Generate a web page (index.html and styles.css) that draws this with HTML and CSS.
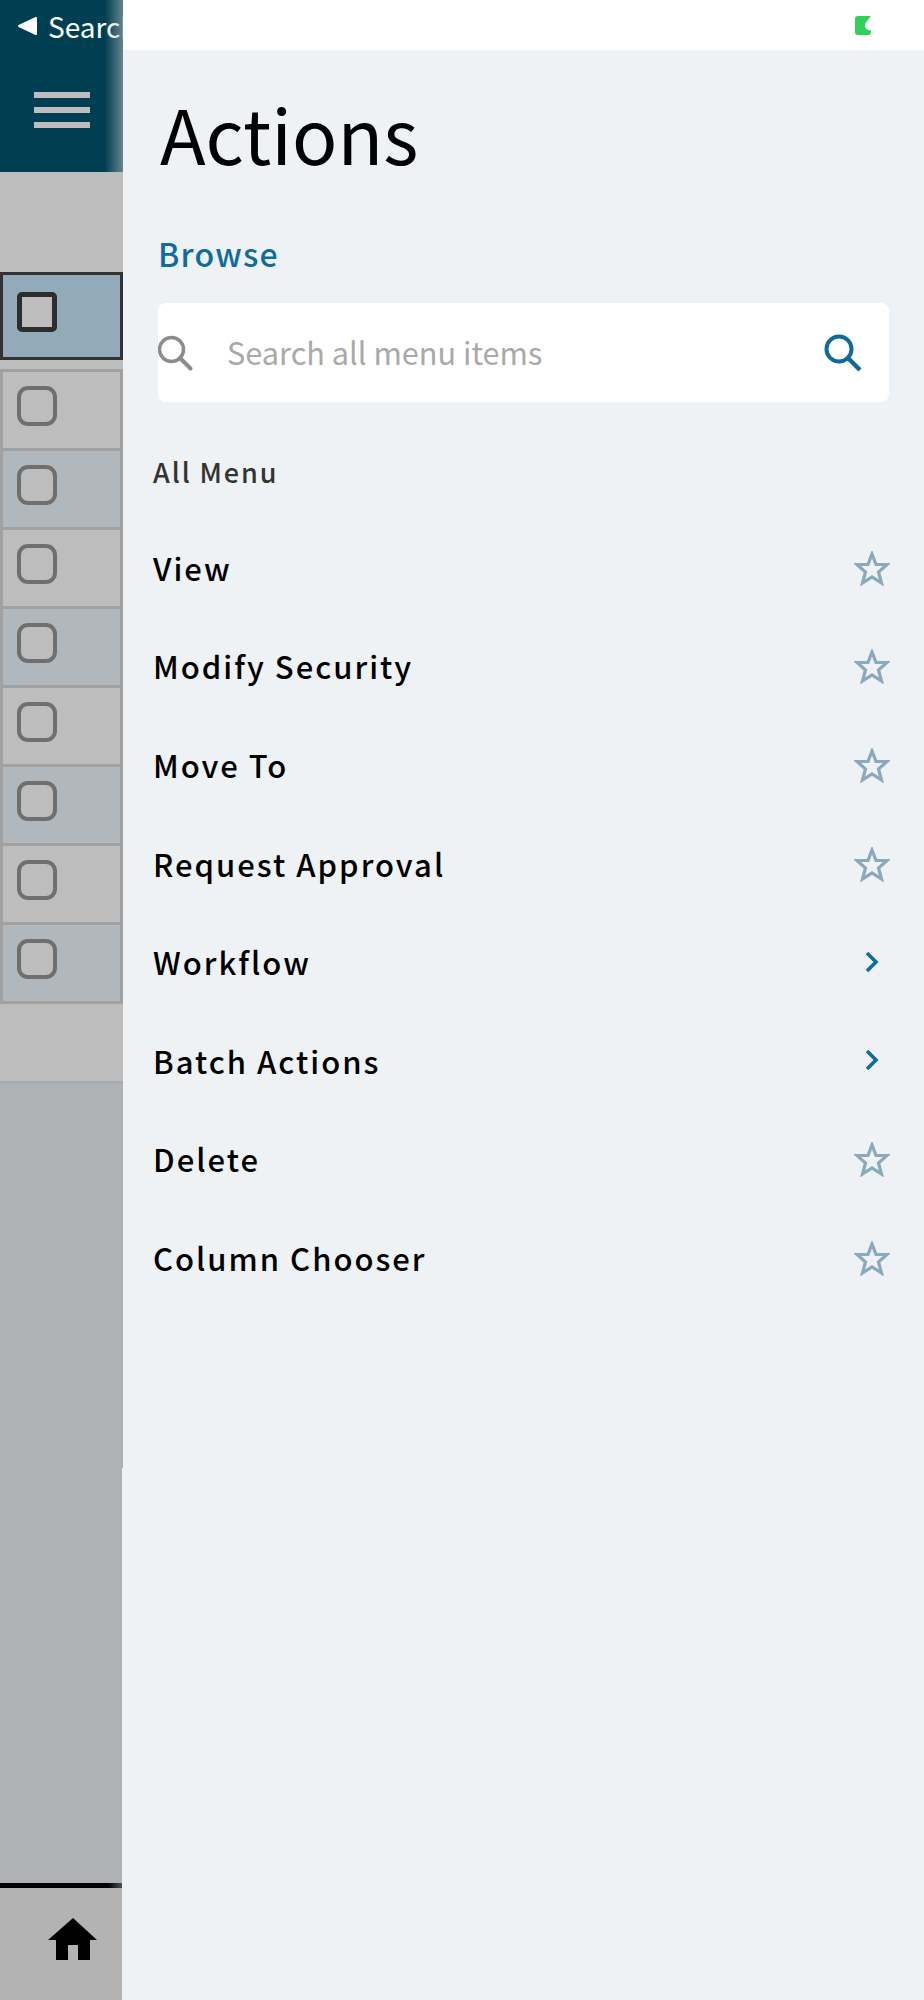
FILE: index.html
```html
<!DOCTYPE html>
<html lang="en">
<head>
  <meta charset="UTF-8" />
  <title>Actions</title>
  <link rel="stylesheet" href="styles.css">
</head>
<body>
  <div class="page">

    <!-- Page behind the drawer -->
    <div class="behind">
      <div class="top-bar">
        <div class="back-link">
          <svg class="back-arrow" width="19" height="18" viewBox="0 0 19 18"><path d="M18 1V17L1 9Z" fill="#fff" stroke="#fff" stroke-width="2" stroke-linejoin="round"/></svg>
          <span>Search</span>
        </div>
        <div class="hamburger"><i></i><i></i><i></i></div>
      </div>

      <div class="list-area">
        <div class="file-row selected"><span class="check"></span></div>
        <div class="file-rows">
          <div class="file-row"><span class="check"></span></div>
          <div class="file-row alt"><span class="check"></span></div>
          <div class="file-row"><span class="check"></span></div>
          <div class="file-row alt"><span class="check"></span></div>
          <div class="file-row"><span class="check"></span></div>
          <div class="file-row alt"><span class="check"></span></div>
          <div class="file-row"><span class="check"></span></div>
          <div class="file-row alt"><span class="check"></span></div>
        </div>
      </div>

      <div class="list-footer"></div>
      <div class="empty-top"></div>
      <div class="empty-bottom"></div>

      <div class="tab-bar">
        <svg width="50" height="42" viewBox="0 0 50 42"><path d="M25 0L49 22H42V42H30V27H20V42H8V22H0Z" fill="#000"/></svg>
      </div>
    </div>

    <!-- Actions drawer -->
    <div class="drawer">
      <div class="status-bar">
        <svg width="16" height="19" viewBox="0 0 16 19"><path d="M3 0H16L10.5 7Q9.5 9.500 10.500 12Q12 14 16 14.500V16Q16 19 13 19H3Q0 19 0 16V3Q0 0 3 0Z" fill="#30d158"/></svg>
      </div>

      <div class="drawer-body">
        <h1 class="title">Actions</h1>
        <a class="browse">Browse</a>

        <div class="search-box">
          <svg class="search-icon" width="36" height="36" viewBox="0 0 36 36"><circle cx="13.500" cy="14.500" r="12" fill="none" stroke="#8c8c8c" stroke-width="3.500"/><path d="M22 23L32.500 33.500" stroke="#8c8c8c" stroke-width="4" stroke-linecap="round"/></svg>
          <span class="search-text">Search all menu items</span>
          <svg class="search-go" width="38" height="38" viewBox="0 0 38 38"><circle cx="15" cy="15" r="12.500" fill="none" stroke="#0f6a9b" stroke-width="4"/><path d="M24 24L36 36" stroke="#0f6a9b" stroke-width="4.500"/></svg>
        </div>

        <div class="menu-label">All Menu</div>

        <ul class="menu">
          <li>View <svg class="star" viewBox="0 0 36 35"><path d="M18 3L22 13.500H33L24.500 21L27.500 32L18 25.800L8.500 32L11.500 21L3 13.500H14Z"/></svg></li>
          <li>Modify Security <svg class="star" viewBox="0 0 36 35"><path d="M18 3L22 13.500H33L24.500 21L27.500 32L18 25.800L8.500 32L11.500 21L3 13.500H14Z"/></svg></li>
          <li>Move To <svg class="star" viewBox="0 0 36 35"><path d="M18 3L22 13.500H33L24.500 21L27.500 32L18 25.800L8.500 32L11.500 21L3 13.500H14Z"/></svg></li>
          <li>Request Approval <svg class="star" viewBox="0 0 36 35"><path d="M18 3L22 13.500H33L24.500 21L27.500 32L18 25.800L8.500 32L11.500 21L3 13.500H14Z"/></svg></li>
          <li>Workflow <svg class="chevron" viewBox="0 0 14 22"><path d="M2 2L11 11L2 20"/></svg></li>
          <li>Batch Actions <svg class="chevron" viewBox="0 0 14 22"><path d="M2 2L11 11L2 20"/></svg></li>
          <li>Delete <svg class="star" viewBox="0 0 36 35"><path d="M18 3L22 13.500H33L24.500 21L27.500 32L18 25.800L8.500 32L11.500 21L3 13.500H14Z"/></svg></li>
          <li>Column Chooser <svg class="star" viewBox="0 0 36 35"><path d="M18 3L22 13.500H33L24.500 21L27.500 32L18 25.800L8.500 32L11.500 21L3 13.500H14Z"/></svg></li>
        </ul>
      </div>
    </div>

  </div>
</body>
</html>
```

FILE: styles.css
```css
* {
  box-sizing: border-box;
}

body {
  margin: 0;
  padding: 0;
  background: #eef2f5;
  font-family: "Noto Sans CJK SC", "Noto Sans", sans-serif;
}

.page {
  display: flex;
  width: 924px;
  height: 2000px;
  overflow: hidden;
}

/* left strip behind the drawer */
.behind {
  width: 123px;
  flex-shrink: 0;
  display: flex;
  flex-direction: column;
  overflow: hidden;
}

.top-bar {
  height: 172px;
  position: relative;
  background: #003f52;
  padding: 17px 0 0 18px;
}

.top-bar::after {
  content: "";
  position: absolute;
  top: 0;
  right: 0;
  bottom: 0;
  width: 18px;
  background: linear-gradient(to right, rgba(189, 189, 189, 0), rgba(189, 189, 189, 0.55));
}

.back-link {
  display: flex;
  align-items: center;
  gap: 11px;
  height: 18px;
  color: #fff;
  font-size: 28px;
  line-height: 18px;
  white-space: nowrap;
}

.back-arrow {
  flex-shrink: 0;
}

.hamburger {
  display: flex;
  flex-direction: column;
  gap: 9px;
  width: 56px;
  margin: 57px 0 0 16px;
}

.hamburger i {
  display: block;
  height: 6px;
  background: #bdbdbd;
}

.list-area {
  height: 832px;
  background: #bdbdbd;
  padding-top: 100px;
}

.file-row {
  height: 79px;
  background: #bdbdbd;
  border: 3px solid #a1a1a1;
  border-bottom: none;
  padding: 14px 0 0 14px;
}

.file-row.alt {
  background: #b0b8be;
}

.file-row.selected {
  height: 88px;
  margin-bottom: 9px;
  background: #92aaba;
  border: 3px solid #333;
  padding-top: 17px;
}

.file-rows {
  border-bottom: 4px solid #a1a1a1;
}

.check {
  display: block;
  width: 40px;
  height: 40px;
  background: #bdbdbd;
  border: 4px solid #6f6f6f;
  border-radius: 11px;
}

.selected .check {
  border: 5px solid #2d2d2d;
  border-radius: 5px;
}

.list-footer {
  height: 80px;
  background: #bdbdbd;
  border-bottom: 3px solid #a9acae;
}

.empty-top {
  height: 384px;
  background: #afb2b4;
}

.empty-bottom {
  height: 420px;
  margin-right: 1px;
  background: #afb2b4;
  border-bottom: 5px solid #000;
  border-image: linear-gradient(to right, #000 88%, #555) 1;
}

.tab-bar {
  flex: 1;
  margin-right: 1px;
  background: #b3b3b3;
  padding: 30px 0 0 48px;
}

/* drawer */
.drawer {
  flex: 1;
  display: flex;
  flex-direction: column;
}

.status-bar {
  height: 50px;
  background: #fff;
  display: flex;
  justify-content: flex-end;
  padding: 16px 53px 0 0;
}

.drawer-body {
  flex: 1;
  padding: 0 35px 0 30px;
}

.title {
  margin: 33px 0 0 7px;
  font-size: 75px;
  font-weight: 400;
  line-height: 100px;
  color: #000;
}

.browse {
  display: block;
  margin: 51px 0 0 5px;
  color: #0f6d9e;
  font-size: 32px;
  font-weight: 500;
  letter-spacing: 1.2px;
  line-height: 38px;
}

.search-box {
  display: flex;
  align-items: center;
  height: 99px;
  margin: 31px 0 0 5px;
  background: #fff;
  border-radius: 8px;
  padding: 0 27px 0 0;
}

.search-text {
  flex: 1;
  margin: 0 0 2px 33px;
  color: #a9a9a9;
  font-size: 30.7px;
}

.menu-label {
  margin-top: 52px;
  color: #333;
  font-size: 27px;
  font-weight: 500;
  letter-spacing: 1.9px;
  line-height: 36px;
}

.menu {
  list-style: none;
  margin: 28px 0 0 0;
  padding: 0;
}

.menu li {
  display: flex;
  justify-content: space-between;
  align-items: center;
  height: 98.6px;
  color: #000;
  font-size: 31px;
  font-weight: 500;
  letter-spacing: 2px;
}

.star {
  width: 36px;
  height: 35px;
  margin: 2px -1px 0 0;
  fill: none;
  stroke: #8aa9ba;
  stroke-width: 3.2;
}

.chevron {
  width: 14px;
  height: 22px;
  margin-right: 10px;
  fill: none;
  stroke: #0f6d9e;
  stroke-width: 3.6;
}
```
